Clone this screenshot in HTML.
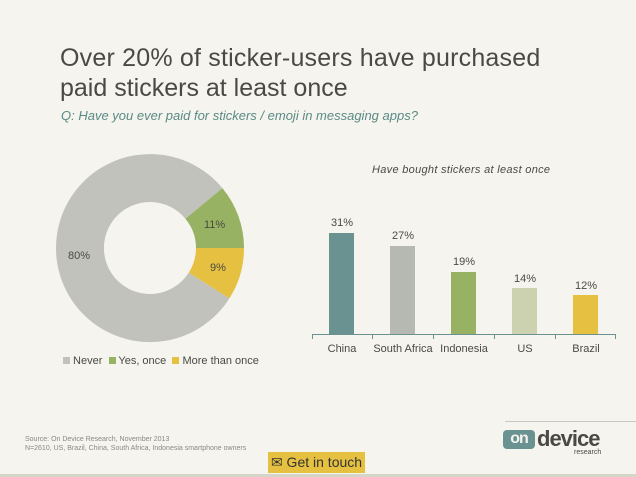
<!DOCTYPE html>
<html><head><meta charset="utf-8"><style>
body{margin:0;width:636px;height:477px;background:#f5f4ee;position:relative;overflow:hidden;font-family:"Liberation Sans",sans-serif;}
.t{position:absolute;left:60px;color:#4a4a44;font-size:25px;white-space:nowrap;}
.a{position:absolute;white-space:nowrap;}
.bar{position:absolute;width:25px;bottom:143px;}
.lab{position:absolute;font-size:11px;color:#4a4a44;width:60px;text-align:center;}
</style></head><body>
<div class="t" style="top:44px;letter-spacing:0.2px">Over 20% of sticker-users have purchased</div>
<div class="t" style="top:74px">paid stickers at least once</div>
<div class="a" style="left:61px;top:108px;font-size:13px;font-style:italic;color:#5a8a86">Q: Have you ever paid for stickers / emoji in messaging apps?</div>

<svg style="position:absolute;left:0;top:0" width="636" height="477">
<path d="M229.4,298.4 A94,94 0 1 1 222.4,188.1 L185.4,218.7 A46,46 0 1 0 188.8,272.6 Z" fill="#c1c2bb"/>
<path d="M222.4,188.1 A94,94 0 0 1 244,248 L196,248 A46,46 0 0 0 185.4,218.7 Z" fill="#97b262"/>
<path d="M244,248 A94,94 0 0 1 229.4,298.4 L188.8,272.6 A46,46 0 0 0 196,248 Z" fill="#e6c040"/>
<g font-family="Liberation Sans" font-size="11" fill="#4a4a44">
<text x="68" y="259">80%</text><text x="204" y="228">11%</text><text x="210" y="271">9%</text>
</g>
<line x1="312" y1="334.5" x2="616" y2="334.5" stroke="#6a9290"/>
<g stroke="#6a9290"><line x1="312.5" y1="334" x2="312.5" y2="339"/><line x1="372.5" y1="334" x2="372.5" y2="339"/><line x1="433.5" y1="334" x2="433.5" y2="339"/><line x1="494.5" y1="334" x2="494.5" y2="339"/><line x1="555.5" y1="334" x2="555.5" y2="339"/><line x1="615.5" y1="334" x2="615.5" y2="339"/></g>
<line x1="505" y1="421.5" x2="636" y2="421.5" stroke="#c8c8c0"/>
<rect x="0" y="474" width="636" height="3" fill="#d6d6c8"/>
</svg>

<div class="a" style="left:63px;top:355px;font-size:11px;color:#4a4a44">
<span style="display:inline-block;width:7px;height:7px;background:#c1c2bb"></span> Never &nbsp;<span style="display:inline-block;width:7px;height:7px;background:#97b262"></span> Yes, once &nbsp;<span style="display:inline-block;width:7px;height:7px;background:#e6c040"></span> More than once</div>

<div class="a" style="left:372px;top:164px;font-size:11px;font-style:italic;color:#4a4a44;letter-spacing:0.3px">Have bought stickers at least once</div>

<div class="bar" style="left:329px;top:233px;background:#6a9290"></div>
<div class="bar" style="left:390px;top:246px;background:#b5b9b2"></div>
<div class="bar" style="left:451px;top:272px;background:#97b262"></div>
<div class="bar" style="left:512px;top:288px;background:#ccd2b0"></div>
<div class="bar" style="left:573px;top:295px;background:#e6c040"></div>
<div class="lab" style="left:312px;top:217px">31%</div>
<div class="lab" style="left:373px;top:230px">27%</div>
<div class="lab" style="left:434px;top:256px">19%</div>
<div class="lab" style="left:495px;top:273px">14%</div>
<div class="lab" style="left:556px;top:280px">12%</div>
<div class="lab" style="left:312px;top:343px">China</div>
<div class="lab" style="left:363px;top:343px;width:80px">South Africa</div>
<div class="lab" style="left:434px;top:343px">Indonesia</div>
<div class="lab" style="left:495px;top:343px">US</div>
<div class="lab" style="left:556px;top:343px">Brazil</div>

<div class="a" style="left:25px;top:435px;font-size:7px;color:#8a8a80;line-height:9px">Source: On Device Research, November 2013<br>N=2610, US, Brazil, China, South Africa, Indonesia smartphone owners</div>

<div class="a" style="left:268px;top:452px;width:97px;height:21px;background:#e6c040;font-size:14px;color:#333;line-height:21px;text-align:center">&#9993; Get in touch</div>

<div class="a" style="left:503px;top:430px;width:32px;height:19px;background:#6a9290;border-radius:4px;color:#f5f4ee;font-weight:bold;font-size:16px;line-height:18px;text-align:center;letter-spacing:-1px">on</div>
<div class="a" style="left:537px;top:426px;font-size:22px;font-weight:bold;color:#4a4a44;letter-spacing:-1px">device</div>
<div class="a" style="left:574px;top:449px;font-size:7px;color:#4a4a44">research</div>
</body></html>
